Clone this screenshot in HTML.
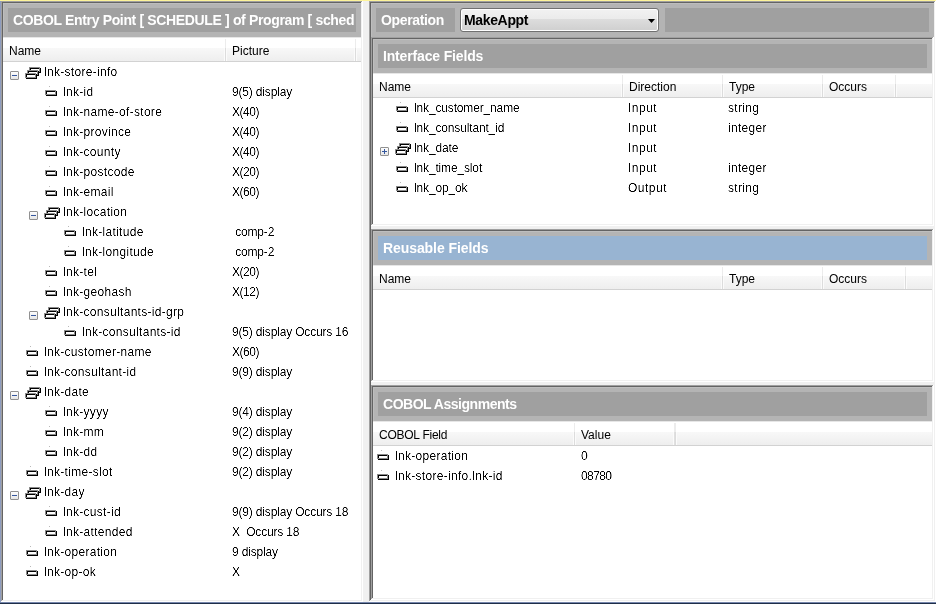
<!DOCTYPE html>
<html><head><meta charset="utf-8"><style>
html,body{margin:0;padding:0;}
body{width:936px;height:604px;position:relative;overflow:hidden;background:#f0f0f0;}
body>div,body>svg{position:absolute;}
.t{font-family:"Liberation Sans",sans-serif;font-size:12px;color:#000;white-space:pre;will-change:transform;}
.tw{background:#fff;filter:brightness(1.08) contrast(1.8);}
.tb{font-family:"Liberation Sans",sans-serif;font-size:14px;font-weight:bold;color:#fff;white-space:pre;line-height:24px;letter-spacing:-0.35px;will-change:transform;}
</style></head><body>
<div style="left:0px;top:0px;width:936px;height:604px;background:#f0f0f0;"></div>
<div style="left:0px;top:0px;width:936px;height:1px;background:#fff59a;"></div>
<div style="left:0px;top:1px;width:1px;height:601px;background:#8e9cbf;"></div>
<div style="left:0px;top:602px;width:936px;height:1px;background:#7686ac;"></div>
<div style="left:0px;top:603px;width:936px;height:1px;background:#1e2e48;"></div>
<div style="left:1px;top:1px;width:362px;height:1px;background:#a0a0a0;"></div>
<div style="left:1px;top:1px;width:1px;height:601px;background:#a0a0a0;"></div>
<div style="left:2px;top:2px;width:360px;height:1px;background:#646464;"></div>
<div style="left:2px;top:2px;width:1px;height:599px;background:#646464;"></div>
<div style="left:2px;top:600px;width:360px;height:1px;background:#f0f0f0;"></div>
<div style="left:361px;top:2px;width:1px;height:599px;background:#f0f0f0;"></div>
<div style="left:1px;top:601px;width:362px;height:1px;background:#ffffff;"></div>
<div style="left:362px;top:1px;width:1px;height:601px;background:#ffffff;"></div>
<div style="left:3px;top:3px;width:358px;height:34px;background:#b4b4b4;"></div>
<div style="left:3px;top:3px;width:358px;height:1px;background:#bebebe;"></div>
<div style="left:3px;top:3px;width:1px;height:34px;background:#bebebe;"></div>
<div style="left:8px;top:8px;width:348px;height:24px;background:#a0a0a0;"></div>
<div style="left:3px;top:37px;width:358px;height:563px;background:#ffffff;"></div>
<div class="tb" style="left:13px;top:8px;width:342px;overflow:hidden;letter-spacing:-0.35px">COBOL Entry Point [ SCHEDULE ] of Program [ sched</div>
<div style="left:3px;top:37px;width:358px;height:11px;background:#ffffff;"></div>
<div style="left:3px;top:37px;width:358px;height:1px;background:#e6e6e6;"></div>
<div style="left:3px;top:48px;width:358px;height:13px;background:linear-gradient(#f8f8f8,#eeeeee)"></div>
<div style="left:3px;top:61px;width:358px;height:1px;background:#d2d2d2;"></div>
<div style="left:225px;top:39px;width:1px;height:9px;background:#ececec;"></div>
<div style="left:225px;top:48px;width:1px;height:13px;background:#dcdcdc;"></div>
<div style="left:224px;top:48px;width:1px;height:13px;background:#fbfbfb;"></div>
<div style="left:226px;top:48px;width:1px;height:13px;background:#fbfbfb;"></div>
<div style="left:355px;top:39px;width:1px;height:9px;background:#ececec;"></div>
<div style="left:355px;top:48px;width:1px;height:13px;background:#dcdcdc;"></div>
<div style="left:354px;top:48px;width:1px;height:13px;background:#fbfbfb;"></div>
<div style="left:356px;top:48px;width:1px;height:13px;background:#fbfbfb;"></div>
<div class="t" style="left:9px;top:39px;line-height:24px">Name</div>
<div class="t" style="left:232px;top:39px;line-height:24px">Picture</div>
<div style="left:10px;top:71px;width:7px;height:7px;border:1px solid #919191;border-radius:1px;background:linear-gradient(#fdfdfd,#e6e6e6)"></div>
<div style="left:12px;top:75px;width:5px;height:1px;background:#35579e;"></div>
<div style="left:29px;top:67px;width:11px;height:1px;background:#8a8a8a;"></div>
<div style="left:29px;top:67px;width:1px;height:5px;background:#8a8a8a;"></div>
<div style="left:29px;top:71px;width:11px;height:1px;background:#8a8a8a;"></div>
<div style="left:39px;top:67px;width:1px;height:5px;background:#8a8a8a;"></div>
<div style="left:30px;top:68px;width:9px;height:1px;background:#000;"></div>
<div style="left:30px;top:68px;width:1px;height:3px;background:#000;"></div>
<div style="left:31px;top:69px;width:8px;height:2px;background:#fff;"></div>
<div style="left:40px;top:68px;width:1px;height:5px;background:#000;"></div>
<div style="left:30px;top:72px;width:11px;height:1px;background:#000;"></div>
<div style="left:27px;top:70px;width:11px;height:1px;background:#8a8a8a;"></div>
<div style="left:27px;top:70px;width:1px;height:5px;background:#8a8a8a;"></div>
<div style="left:27px;top:74px;width:11px;height:1px;background:#8a8a8a;"></div>
<div style="left:37px;top:70px;width:1px;height:5px;background:#8a8a8a;"></div>
<div style="left:28px;top:71px;width:9px;height:1px;background:#000;"></div>
<div style="left:28px;top:71px;width:1px;height:3px;background:#000;"></div>
<div style="left:29px;top:72px;width:8px;height:2px;background:#fff;"></div>
<div style="left:38px;top:71px;width:1px;height:5px;background:#000;"></div>
<div style="left:28px;top:75px;width:11px;height:1px;background:#000;"></div>
<div style="left:25px;top:73px;width:11px;height:1px;background:#8a8a8a;"></div>
<div style="left:25px;top:73px;width:1px;height:5px;background:#8a8a8a;"></div>
<div style="left:25px;top:77px;width:11px;height:1px;background:#8a8a8a;"></div>
<div style="left:35px;top:73px;width:1px;height:5px;background:#8a8a8a;"></div>
<div style="left:26px;top:74px;width:9px;height:1px;background:#000;"></div>
<div style="left:26px;top:74px;width:1px;height:3px;background:#000;"></div>
<div style="left:27px;top:75px;width:8px;height:2px;background:#fff;"></div>
<div style="left:36px;top:74px;width:1px;height:5px;background:#000;"></div>
<div style="left:26px;top:78px;width:11px;height:1px;background:#000;"></div>
<div class="t tw" style="left:44px;top:62px;line-height:20px;letter-spacing:0.3px">lnk-store-info</div>
<div style="left:49px;top:86px;width:1px;height:1px;background:#b8b8b8;"></div>
<div style="left:45px;top:90px;width:11px;height:1px;background:#8a8a8a;"></div>
<div style="left:45px;top:90px;width:1px;height:5px;background:#8a8a8a;"></div>
<div style="left:45px;top:94px;width:11px;height:1px;background:#8a8a8a;"></div>
<div style="left:55px;top:90px;width:1px;height:5px;background:#8a8a8a;"></div>
<div style="left:46px;top:91px;width:9px;height:1px;background:#000;"></div>
<div style="left:46px;top:91px;width:1px;height:3px;background:#000;"></div>
<div style="left:47px;top:92px;width:8px;height:2px;background:#fff;"></div>
<div style="left:56px;top:91px;width:1px;height:5px;background:#000;"></div>
<div style="left:46px;top:95px;width:11px;height:1px;background:#000;"></div>
<div class="t tw" style="left:63px;top:82px;line-height:20px;letter-spacing:0.3px">lnk-id</div>
<div class="t tw" style="left:232px;top:82px;line-height:20px;letter-spacing:-0.17px">9(5) display</div>
<div style="left:49px;top:106px;width:1px;height:1px;background:#b8b8b8;"></div>
<div style="left:45px;top:110px;width:11px;height:1px;background:#8a8a8a;"></div>
<div style="left:45px;top:110px;width:1px;height:5px;background:#8a8a8a;"></div>
<div style="left:45px;top:114px;width:11px;height:1px;background:#8a8a8a;"></div>
<div style="left:55px;top:110px;width:1px;height:5px;background:#8a8a8a;"></div>
<div style="left:46px;top:111px;width:9px;height:1px;background:#000;"></div>
<div style="left:46px;top:111px;width:1px;height:3px;background:#000;"></div>
<div style="left:47px;top:112px;width:8px;height:2px;background:#fff;"></div>
<div style="left:56px;top:111px;width:1px;height:5px;background:#000;"></div>
<div style="left:46px;top:115px;width:11px;height:1px;background:#000;"></div>
<div class="t tw" style="left:63px;top:102px;line-height:20px;letter-spacing:0.3px">lnk-name-of-store</div>
<div class="t tw" style="left:232px;top:102px;line-height:20px;letter-spacing:-0.45px">X(40)</div>
<div style="left:49px;top:126px;width:1px;height:1px;background:#b8b8b8;"></div>
<div style="left:45px;top:130px;width:11px;height:1px;background:#8a8a8a;"></div>
<div style="left:45px;top:130px;width:1px;height:5px;background:#8a8a8a;"></div>
<div style="left:45px;top:134px;width:11px;height:1px;background:#8a8a8a;"></div>
<div style="left:55px;top:130px;width:1px;height:5px;background:#8a8a8a;"></div>
<div style="left:46px;top:131px;width:9px;height:1px;background:#000;"></div>
<div style="left:46px;top:131px;width:1px;height:3px;background:#000;"></div>
<div style="left:47px;top:132px;width:8px;height:2px;background:#fff;"></div>
<div style="left:56px;top:131px;width:1px;height:5px;background:#000;"></div>
<div style="left:46px;top:135px;width:11px;height:1px;background:#000;"></div>
<div class="t tw" style="left:63px;top:122px;line-height:20px;letter-spacing:0.3px">lnk-province</div>
<div class="t tw" style="left:232px;top:122px;line-height:20px;letter-spacing:-0.45px">X(40)</div>
<div style="left:49px;top:146px;width:1px;height:1px;background:#b8b8b8;"></div>
<div style="left:45px;top:150px;width:11px;height:1px;background:#8a8a8a;"></div>
<div style="left:45px;top:150px;width:1px;height:5px;background:#8a8a8a;"></div>
<div style="left:45px;top:154px;width:11px;height:1px;background:#8a8a8a;"></div>
<div style="left:55px;top:150px;width:1px;height:5px;background:#8a8a8a;"></div>
<div style="left:46px;top:151px;width:9px;height:1px;background:#000;"></div>
<div style="left:46px;top:151px;width:1px;height:3px;background:#000;"></div>
<div style="left:47px;top:152px;width:8px;height:2px;background:#fff;"></div>
<div style="left:56px;top:151px;width:1px;height:5px;background:#000;"></div>
<div style="left:46px;top:155px;width:11px;height:1px;background:#000;"></div>
<div class="t tw" style="left:63px;top:142px;line-height:20px;letter-spacing:0.3px">lnk-county</div>
<div class="t tw" style="left:232px;top:142px;line-height:20px;letter-spacing:-0.45px">X(40)</div>
<div style="left:49px;top:166px;width:1px;height:1px;background:#b8b8b8;"></div>
<div style="left:45px;top:170px;width:11px;height:1px;background:#8a8a8a;"></div>
<div style="left:45px;top:170px;width:1px;height:5px;background:#8a8a8a;"></div>
<div style="left:45px;top:174px;width:11px;height:1px;background:#8a8a8a;"></div>
<div style="left:55px;top:170px;width:1px;height:5px;background:#8a8a8a;"></div>
<div style="left:46px;top:171px;width:9px;height:1px;background:#000;"></div>
<div style="left:46px;top:171px;width:1px;height:3px;background:#000;"></div>
<div style="left:47px;top:172px;width:8px;height:2px;background:#fff;"></div>
<div style="left:56px;top:171px;width:1px;height:5px;background:#000;"></div>
<div style="left:46px;top:175px;width:11px;height:1px;background:#000;"></div>
<div class="t tw" style="left:63px;top:162px;line-height:20px;letter-spacing:0.3px">lnk-postcode</div>
<div class="t tw" style="left:232px;top:162px;line-height:20px;letter-spacing:-0.45px">X(20)</div>
<div style="left:49px;top:186px;width:1px;height:1px;background:#b8b8b8;"></div>
<div style="left:45px;top:190px;width:11px;height:1px;background:#8a8a8a;"></div>
<div style="left:45px;top:190px;width:1px;height:5px;background:#8a8a8a;"></div>
<div style="left:45px;top:194px;width:11px;height:1px;background:#8a8a8a;"></div>
<div style="left:55px;top:190px;width:1px;height:5px;background:#8a8a8a;"></div>
<div style="left:46px;top:191px;width:9px;height:1px;background:#000;"></div>
<div style="left:46px;top:191px;width:1px;height:3px;background:#000;"></div>
<div style="left:47px;top:192px;width:8px;height:2px;background:#fff;"></div>
<div style="left:56px;top:191px;width:1px;height:5px;background:#000;"></div>
<div style="left:46px;top:195px;width:11px;height:1px;background:#000;"></div>
<div class="t tw" style="left:63px;top:182px;line-height:20px;letter-spacing:0.3px">lnk-email</div>
<div class="t tw" style="left:232px;top:182px;line-height:20px;letter-spacing:-0.45px">X(60)</div>
<div style="left:29px;top:211px;width:7px;height:7px;border:1px solid #919191;border-radius:1px;background:linear-gradient(#fdfdfd,#e6e6e6)"></div>
<div style="left:31px;top:215px;width:5px;height:1px;background:#35579e;"></div>
<div style="left:48px;top:207px;width:11px;height:1px;background:#8a8a8a;"></div>
<div style="left:48px;top:207px;width:1px;height:5px;background:#8a8a8a;"></div>
<div style="left:48px;top:211px;width:11px;height:1px;background:#8a8a8a;"></div>
<div style="left:58px;top:207px;width:1px;height:5px;background:#8a8a8a;"></div>
<div style="left:49px;top:208px;width:9px;height:1px;background:#000;"></div>
<div style="left:49px;top:208px;width:1px;height:3px;background:#000;"></div>
<div style="left:50px;top:209px;width:8px;height:2px;background:#fff;"></div>
<div style="left:59px;top:208px;width:1px;height:5px;background:#000;"></div>
<div style="left:49px;top:212px;width:11px;height:1px;background:#000;"></div>
<div style="left:46px;top:210px;width:11px;height:1px;background:#8a8a8a;"></div>
<div style="left:46px;top:210px;width:1px;height:5px;background:#8a8a8a;"></div>
<div style="left:46px;top:214px;width:11px;height:1px;background:#8a8a8a;"></div>
<div style="left:56px;top:210px;width:1px;height:5px;background:#8a8a8a;"></div>
<div style="left:47px;top:211px;width:9px;height:1px;background:#000;"></div>
<div style="left:47px;top:211px;width:1px;height:3px;background:#000;"></div>
<div style="left:48px;top:212px;width:8px;height:2px;background:#fff;"></div>
<div style="left:57px;top:211px;width:1px;height:5px;background:#000;"></div>
<div style="left:47px;top:215px;width:11px;height:1px;background:#000;"></div>
<div style="left:44px;top:213px;width:11px;height:1px;background:#8a8a8a;"></div>
<div style="left:44px;top:213px;width:1px;height:5px;background:#8a8a8a;"></div>
<div style="left:44px;top:217px;width:11px;height:1px;background:#8a8a8a;"></div>
<div style="left:54px;top:213px;width:1px;height:5px;background:#8a8a8a;"></div>
<div style="left:45px;top:214px;width:9px;height:1px;background:#000;"></div>
<div style="left:45px;top:214px;width:1px;height:3px;background:#000;"></div>
<div style="left:46px;top:215px;width:8px;height:2px;background:#fff;"></div>
<div style="left:55px;top:214px;width:1px;height:5px;background:#000;"></div>
<div style="left:45px;top:218px;width:11px;height:1px;background:#000;"></div>
<div class="t tw" style="left:63px;top:202px;line-height:20px;letter-spacing:0.3px">lnk-location</div>
<div style="left:68px;top:226px;width:1px;height:1px;background:#b8b8b8;"></div>
<div style="left:64px;top:230px;width:11px;height:1px;background:#8a8a8a;"></div>
<div style="left:64px;top:230px;width:1px;height:5px;background:#8a8a8a;"></div>
<div style="left:64px;top:234px;width:11px;height:1px;background:#8a8a8a;"></div>
<div style="left:74px;top:230px;width:1px;height:5px;background:#8a8a8a;"></div>
<div style="left:65px;top:231px;width:9px;height:1px;background:#000;"></div>
<div style="left:65px;top:231px;width:1px;height:3px;background:#000;"></div>
<div style="left:66px;top:232px;width:8px;height:2px;background:#fff;"></div>
<div style="left:75px;top:231px;width:1px;height:5px;background:#000;"></div>
<div style="left:65px;top:235px;width:11px;height:1px;background:#000;"></div>
<div class="t tw" style="left:82px;top:222px;line-height:20px;letter-spacing:0.3px">lnk-latitude</div>
<div class="t tw" style="left:232px;top:222px;line-height:20px;letter-spacing:-0.17px"> comp-2</div>
<div style="left:68px;top:246px;width:1px;height:1px;background:#b8b8b8;"></div>
<div style="left:64px;top:250px;width:11px;height:1px;background:#8a8a8a;"></div>
<div style="left:64px;top:250px;width:1px;height:5px;background:#8a8a8a;"></div>
<div style="left:64px;top:254px;width:11px;height:1px;background:#8a8a8a;"></div>
<div style="left:74px;top:250px;width:1px;height:5px;background:#8a8a8a;"></div>
<div style="left:65px;top:251px;width:9px;height:1px;background:#000;"></div>
<div style="left:65px;top:251px;width:1px;height:3px;background:#000;"></div>
<div style="left:66px;top:252px;width:8px;height:2px;background:#fff;"></div>
<div style="left:75px;top:251px;width:1px;height:5px;background:#000;"></div>
<div style="left:65px;top:255px;width:11px;height:1px;background:#000;"></div>
<div class="t tw" style="left:82px;top:242px;line-height:20px;letter-spacing:0.3px">lnk-longitude</div>
<div class="t tw" style="left:232px;top:242px;line-height:20px;letter-spacing:-0.17px"> comp-2</div>
<div style="left:49px;top:266px;width:1px;height:1px;background:#b8b8b8;"></div>
<div style="left:45px;top:270px;width:11px;height:1px;background:#8a8a8a;"></div>
<div style="left:45px;top:270px;width:1px;height:5px;background:#8a8a8a;"></div>
<div style="left:45px;top:274px;width:11px;height:1px;background:#8a8a8a;"></div>
<div style="left:55px;top:270px;width:1px;height:5px;background:#8a8a8a;"></div>
<div style="left:46px;top:271px;width:9px;height:1px;background:#000;"></div>
<div style="left:46px;top:271px;width:1px;height:3px;background:#000;"></div>
<div style="left:47px;top:272px;width:8px;height:2px;background:#fff;"></div>
<div style="left:56px;top:271px;width:1px;height:5px;background:#000;"></div>
<div style="left:46px;top:275px;width:11px;height:1px;background:#000;"></div>
<div class="t tw" style="left:63px;top:262px;line-height:20px;letter-spacing:0.3px">lnk-tel</div>
<div class="t tw" style="left:232px;top:262px;line-height:20px;letter-spacing:-0.45px">X(20)</div>
<div style="left:49px;top:286px;width:1px;height:1px;background:#b8b8b8;"></div>
<div style="left:45px;top:290px;width:11px;height:1px;background:#8a8a8a;"></div>
<div style="left:45px;top:290px;width:1px;height:5px;background:#8a8a8a;"></div>
<div style="left:45px;top:294px;width:11px;height:1px;background:#8a8a8a;"></div>
<div style="left:55px;top:290px;width:1px;height:5px;background:#8a8a8a;"></div>
<div style="left:46px;top:291px;width:9px;height:1px;background:#000;"></div>
<div style="left:46px;top:291px;width:1px;height:3px;background:#000;"></div>
<div style="left:47px;top:292px;width:8px;height:2px;background:#fff;"></div>
<div style="left:56px;top:291px;width:1px;height:5px;background:#000;"></div>
<div style="left:46px;top:295px;width:11px;height:1px;background:#000;"></div>
<div class="t tw" style="left:63px;top:282px;line-height:20px;letter-spacing:0.3px">lnk-geohash</div>
<div class="t tw" style="left:232px;top:282px;line-height:20px;letter-spacing:-0.45px">X(12)</div>
<div style="left:29px;top:311px;width:7px;height:7px;border:1px solid #919191;border-radius:1px;background:linear-gradient(#fdfdfd,#e6e6e6)"></div>
<div style="left:31px;top:315px;width:5px;height:1px;background:#35579e;"></div>
<div style="left:48px;top:307px;width:11px;height:1px;background:#8a8a8a;"></div>
<div style="left:48px;top:307px;width:1px;height:5px;background:#8a8a8a;"></div>
<div style="left:48px;top:311px;width:11px;height:1px;background:#8a8a8a;"></div>
<div style="left:58px;top:307px;width:1px;height:5px;background:#8a8a8a;"></div>
<div style="left:49px;top:308px;width:9px;height:1px;background:#000;"></div>
<div style="left:49px;top:308px;width:1px;height:3px;background:#000;"></div>
<div style="left:50px;top:309px;width:8px;height:2px;background:#fff;"></div>
<div style="left:59px;top:308px;width:1px;height:5px;background:#000;"></div>
<div style="left:49px;top:312px;width:11px;height:1px;background:#000;"></div>
<div style="left:46px;top:310px;width:11px;height:1px;background:#8a8a8a;"></div>
<div style="left:46px;top:310px;width:1px;height:5px;background:#8a8a8a;"></div>
<div style="left:46px;top:314px;width:11px;height:1px;background:#8a8a8a;"></div>
<div style="left:56px;top:310px;width:1px;height:5px;background:#8a8a8a;"></div>
<div style="left:47px;top:311px;width:9px;height:1px;background:#000;"></div>
<div style="left:47px;top:311px;width:1px;height:3px;background:#000;"></div>
<div style="left:48px;top:312px;width:8px;height:2px;background:#fff;"></div>
<div style="left:57px;top:311px;width:1px;height:5px;background:#000;"></div>
<div style="left:47px;top:315px;width:11px;height:1px;background:#000;"></div>
<div style="left:44px;top:313px;width:11px;height:1px;background:#8a8a8a;"></div>
<div style="left:44px;top:313px;width:1px;height:5px;background:#8a8a8a;"></div>
<div style="left:44px;top:317px;width:11px;height:1px;background:#8a8a8a;"></div>
<div style="left:54px;top:313px;width:1px;height:5px;background:#8a8a8a;"></div>
<div style="left:45px;top:314px;width:9px;height:1px;background:#000;"></div>
<div style="left:45px;top:314px;width:1px;height:3px;background:#000;"></div>
<div style="left:46px;top:315px;width:8px;height:2px;background:#fff;"></div>
<div style="left:55px;top:314px;width:1px;height:5px;background:#000;"></div>
<div style="left:45px;top:318px;width:11px;height:1px;background:#000;"></div>
<div class="t tw" style="left:63px;top:302px;line-height:20px;letter-spacing:0.3px">lnk-consultants-id-grp</div>
<div style="left:68px;top:326px;width:1px;height:1px;background:#b8b8b8;"></div>
<div style="left:64px;top:330px;width:11px;height:1px;background:#8a8a8a;"></div>
<div style="left:64px;top:330px;width:1px;height:5px;background:#8a8a8a;"></div>
<div style="left:64px;top:334px;width:11px;height:1px;background:#8a8a8a;"></div>
<div style="left:74px;top:330px;width:1px;height:5px;background:#8a8a8a;"></div>
<div style="left:65px;top:331px;width:9px;height:1px;background:#000;"></div>
<div style="left:65px;top:331px;width:1px;height:3px;background:#000;"></div>
<div style="left:66px;top:332px;width:8px;height:2px;background:#fff;"></div>
<div style="left:75px;top:331px;width:1px;height:5px;background:#000;"></div>
<div style="left:65px;top:335px;width:11px;height:1px;background:#000;"></div>
<div class="t tw" style="left:82px;top:322px;line-height:20px;letter-spacing:0.3px">lnk-consultants-id</div>
<div class="t tw" style="left:232px;top:322px;line-height:20px;letter-spacing:-0.17px">9(5) display Occurs 16</div>
<div style="left:30px;top:346px;width:1px;height:1px;background:#b8b8b8;"></div>
<div style="left:26px;top:350px;width:11px;height:1px;background:#8a8a8a;"></div>
<div style="left:26px;top:350px;width:1px;height:5px;background:#8a8a8a;"></div>
<div style="left:26px;top:354px;width:11px;height:1px;background:#8a8a8a;"></div>
<div style="left:36px;top:350px;width:1px;height:5px;background:#8a8a8a;"></div>
<div style="left:27px;top:351px;width:9px;height:1px;background:#000;"></div>
<div style="left:27px;top:351px;width:1px;height:3px;background:#000;"></div>
<div style="left:28px;top:352px;width:8px;height:2px;background:#fff;"></div>
<div style="left:37px;top:351px;width:1px;height:5px;background:#000;"></div>
<div style="left:27px;top:355px;width:11px;height:1px;background:#000;"></div>
<div class="t tw" style="left:44px;top:342px;line-height:20px;letter-spacing:0.3px">lnk-customer-name</div>
<div class="t tw" style="left:232px;top:342px;line-height:20px;letter-spacing:-0.45px">X(60)</div>
<div style="left:30px;top:366px;width:1px;height:1px;background:#b8b8b8;"></div>
<div style="left:26px;top:370px;width:11px;height:1px;background:#8a8a8a;"></div>
<div style="left:26px;top:370px;width:1px;height:5px;background:#8a8a8a;"></div>
<div style="left:26px;top:374px;width:11px;height:1px;background:#8a8a8a;"></div>
<div style="left:36px;top:370px;width:1px;height:5px;background:#8a8a8a;"></div>
<div style="left:27px;top:371px;width:9px;height:1px;background:#000;"></div>
<div style="left:27px;top:371px;width:1px;height:3px;background:#000;"></div>
<div style="left:28px;top:372px;width:8px;height:2px;background:#fff;"></div>
<div style="left:37px;top:371px;width:1px;height:5px;background:#000;"></div>
<div style="left:27px;top:375px;width:11px;height:1px;background:#000;"></div>
<div class="t tw" style="left:44px;top:362px;line-height:20px;letter-spacing:0.3px">lnk-consultant-id</div>
<div class="t tw" style="left:232px;top:362px;line-height:20px;letter-spacing:-0.17px">9(9) display</div>
<div style="left:10px;top:391px;width:7px;height:7px;border:1px solid #919191;border-radius:1px;background:linear-gradient(#fdfdfd,#e6e6e6)"></div>
<div style="left:12px;top:395px;width:5px;height:1px;background:#35579e;"></div>
<div style="left:29px;top:387px;width:11px;height:1px;background:#8a8a8a;"></div>
<div style="left:29px;top:387px;width:1px;height:5px;background:#8a8a8a;"></div>
<div style="left:29px;top:391px;width:11px;height:1px;background:#8a8a8a;"></div>
<div style="left:39px;top:387px;width:1px;height:5px;background:#8a8a8a;"></div>
<div style="left:30px;top:388px;width:9px;height:1px;background:#000;"></div>
<div style="left:30px;top:388px;width:1px;height:3px;background:#000;"></div>
<div style="left:31px;top:389px;width:8px;height:2px;background:#fff;"></div>
<div style="left:40px;top:388px;width:1px;height:5px;background:#000;"></div>
<div style="left:30px;top:392px;width:11px;height:1px;background:#000;"></div>
<div style="left:27px;top:390px;width:11px;height:1px;background:#8a8a8a;"></div>
<div style="left:27px;top:390px;width:1px;height:5px;background:#8a8a8a;"></div>
<div style="left:27px;top:394px;width:11px;height:1px;background:#8a8a8a;"></div>
<div style="left:37px;top:390px;width:1px;height:5px;background:#8a8a8a;"></div>
<div style="left:28px;top:391px;width:9px;height:1px;background:#000;"></div>
<div style="left:28px;top:391px;width:1px;height:3px;background:#000;"></div>
<div style="left:29px;top:392px;width:8px;height:2px;background:#fff;"></div>
<div style="left:38px;top:391px;width:1px;height:5px;background:#000;"></div>
<div style="left:28px;top:395px;width:11px;height:1px;background:#000;"></div>
<div style="left:25px;top:393px;width:11px;height:1px;background:#8a8a8a;"></div>
<div style="left:25px;top:393px;width:1px;height:5px;background:#8a8a8a;"></div>
<div style="left:25px;top:397px;width:11px;height:1px;background:#8a8a8a;"></div>
<div style="left:35px;top:393px;width:1px;height:5px;background:#8a8a8a;"></div>
<div style="left:26px;top:394px;width:9px;height:1px;background:#000;"></div>
<div style="left:26px;top:394px;width:1px;height:3px;background:#000;"></div>
<div style="left:27px;top:395px;width:8px;height:2px;background:#fff;"></div>
<div style="left:36px;top:394px;width:1px;height:5px;background:#000;"></div>
<div style="left:26px;top:398px;width:11px;height:1px;background:#000;"></div>
<div class="t tw" style="left:44px;top:382px;line-height:20px;letter-spacing:0.3px">lnk-date</div>
<div style="left:49px;top:406px;width:1px;height:1px;background:#b8b8b8;"></div>
<div style="left:45px;top:410px;width:11px;height:1px;background:#8a8a8a;"></div>
<div style="left:45px;top:410px;width:1px;height:5px;background:#8a8a8a;"></div>
<div style="left:45px;top:414px;width:11px;height:1px;background:#8a8a8a;"></div>
<div style="left:55px;top:410px;width:1px;height:5px;background:#8a8a8a;"></div>
<div style="left:46px;top:411px;width:9px;height:1px;background:#000;"></div>
<div style="left:46px;top:411px;width:1px;height:3px;background:#000;"></div>
<div style="left:47px;top:412px;width:8px;height:2px;background:#fff;"></div>
<div style="left:56px;top:411px;width:1px;height:5px;background:#000;"></div>
<div style="left:46px;top:415px;width:11px;height:1px;background:#000;"></div>
<div class="t tw" style="left:63px;top:402px;line-height:20px;letter-spacing:0.3px">lnk-yyyy</div>
<div class="t tw" style="left:232px;top:402px;line-height:20px;letter-spacing:-0.17px">9(4) display</div>
<div style="left:49px;top:426px;width:1px;height:1px;background:#b8b8b8;"></div>
<div style="left:45px;top:430px;width:11px;height:1px;background:#8a8a8a;"></div>
<div style="left:45px;top:430px;width:1px;height:5px;background:#8a8a8a;"></div>
<div style="left:45px;top:434px;width:11px;height:1px;background:#8a8a8a;"></div>
<div style="left:55px;top:430px;width:1px;height:5px;background:#8a8a8a;"></div>
<div style="left:46px;top:431px;width:9px;height:1px;background:#000;"></div>
<div style="left:46px;top:431px;width:1px;height:3px;background:#000;"></div>
<div style="left:47px;top:432px;width:8px;height:2px;background:#fff;"></div>
<div style="left:56px;top:431px;width:1px;height:5px;background:#000;"></div>
<div style="left:46px;top:435px;width:11px;height:1px;background:#000;"></div>
<div class="t tw" style="left:63px;top:422px;line-height:20px;letter-spacing:0.3px">lnk-mm</div>
<div class="t tw" style="left:232px;top:422px;line-height:20px;letter-spacing:-0.17px">9(2) display</div>
<div style="left:49px;top:446px;width:1px;height:1px;background:#b8b8b8;"></div>
<div style="left:45px;top:450px;width:11px;height:1px;background:#8a8a8a;"></div>
<div style="left:45px;top:450px;width:1px;height:5px;background:#8a8a8a;"></div>
<div style="left:45px;top:454px;width:11px;height:1px;background:#8a8a8a;"></div>
<div style="left:55px;top:450px;width:1px;height:5px;background:#8a8a8a;"></div>
<div style="left:46px;top:451px;width:9px;height:1px;background:#000;"></div>
<div style="left:46px;top:451px;width:1px;height:3px;background:#000;"></div>
<div style="left:47px;top:452px;width:8px;height:2px;background:#fff;"></div>
<div style="left:56px;top:451px;width:1px;height:5px;background:#000;"></div>
<div style="left:46px;top:455px;width:11px;height:1px;background:#000;"></div>
<div class="t tw" style="left:63px;top:442px;line-height:20px;letter-spacing:0.3px">lnk-dd</div>
<div class="t tw" style="left:232px;top:442px;line-height:20px;letter-spacing:-0.17px">9(2) display</div>
<div style="left:30px;top:466px;width:1px;height:1px;background:#b8b8b8;"></div>
<div style="left:26px;top:470px;width:11px;height:1px;background:#8a8a8a;"></div>
<div style="left:26px;top:470px;width:1px;height:5px;background:#8a8a8a;"></div>
<div style="left:26px;top:474px;width:11px;height:1px;background:#8a8a8a;"></div>
<div style="left:36px;top:470px;width:1px;height:5px;background:#8a8a8a;"></div>
<div style="left:27px;top:471px;width:9px;height:1px;background:#000;"></div>
<div style="left:27px;top:471px;width:1px;height:3px;background:#000;"></div>
<div style="left:28px;top:472px;width:8px;height:2px;background:#fff;"></div>
<div style="left:37px;top:471px;width:1px;height:5px;background:#000;"></div>
<div style="left:27px;top:475px;width:11px;height:1px;background:#000;"></div>
<div class="t tw" style="left:44px;top:462px;line-height:20px;letter-spacing:0.3px">lnk-time-slot</div>
<div class="t tw" style="left:232px;top:462px;line-height:20px;letter-spacing:-0.17px">9(2) display</div>
<div style="left:10px;top:491px;width:7px;height:7px;border:1px solid #919191;border-radius:1px;background:linear-gradient(#fdfdfd,#e6e6e6)"></div>
<div style="left:12px;top:495px;width:5px;height:1px;background:#35579e;"></div>
<div style="left:29px;top:487px;width:11px;height:1px;background:#8a8a8a;"></div>
<div style="left:29px;top:487px;width:1px;height:5px;background:#8a8a8a;"></div>
<div style="left:29px;top:491px;width:11px;height:1px;background:#8a8a8a;"></div>
<div style="left:39px;top:487px;width:1px;height:5px;background:#8a8a8a;"></div>
<div style="left:30px;top:488px;width:9px;height:1px;background:#000;"></div>
<div style="left:30px;top:488px;width:1px;height:3px;background:#000;"></div>
<div style="left:31px;top:489px;width:8px;height:2px;background:#fff;"></div>
<div style="left:40px;top:488px;width:1px;height:5px;background:#000;"></div>
<div style="left:30px;top:492px;width:11px;height:1px;background:#000;"></div>
<div style="left:27px;top:490px;width:11px;height:1px;background:#8a8a8a;"></div>
<div style="left:27px;top:490px;width:1px;height:5px;background:#8a8a8a;"></div>
<div style="left:27px;top:494px;width:11px;height:1px;background:#8a8a8a;"></div>
<div style="left:37px;top:490px;width:1px;height:5px;background:#8a8a8a;"></div>
<div style="left:28px;top:491px;width:9px;height:1px;background:#000;"></div>
<div style="left:28px;top:491px;width:1px;height:3px;background:#000;"></div>
<div style="left:29px;top:492px;width:8px;height:2px;background:#fff;"></div>
<div style="left:38px;top:491px;width:1px;height:5px;background:#000;"></div>
<div style="left:28px;top:495px;width:11px;height:1px;background:#000;"></div>
<div style="left:25px;top:493px;width:11px;height:1px;background:#8a8a8a;"></div>
<div style="left:25px;top:493px;width:1px;height:5px;background:#8a8a8a;"></div>
<div style="left:25px;top:497px;width:11px;height:1px;background:#8a8a8a;"></div>
<div style="left:35px;top:493px;width:1px;height:5px;background:#8a8a8a;"></div>
<div style="left:26px;top:494px;width:9px;height:1px;background:#000;"></div>
<div style="left:26px;top:494px;width:1px;height:3px;background:#000;"></div>
<div style="left:27px;top:495px;width:8px;height:2px;background:#fff;"></div>
<div style="left:36px;top:494px;width:1px;height:5px;background:#000;"></div>
<div style="left:26px;top:498px;width:11px;height:1px;background:#000;"></div>
<div class="t tw" style="left:44px;top:482px;line-height:20px;letter-spacing:0.3px">lnk-day</div>
<div style="left:49px;top:506px;width:1px;height:1px;background:#b8b8b8;"></div>
<div style="left:45px;top:510px;width:11px;height:1px;background:#8a8a8a;"></div>
<div style="left:45px;top:510px;width:1px;height:5px;background:#8a8a8a;"></div>
<div style="left:45px;top:514px;width:11px;height:1px;background:#8a8a8a;"></div>
<div style="left:55px;top:510px;width:1px;height:5px;background:#8a8a8a;"></div>
<div style="left:46px;top:511px;width:9px;height:1px;background:#000;"></div>
<div style="left:46px;top:511px;width:1px;height:3px;background:#000;"></div>
<div style="left:47px;top:512px;width:8px;height:2px;background:#fff;"></div>
<div style="left:56px;top:511px;width:1px;height:5px;background:#000;"></div>
<div style="left:46px;top:515px;width:11px;height:1px;background:#000;"></div>
<div class="t tw" style="left:63px;top:502px;line-height:20px;letter-spacing:0.3px">lnk-cust-id</div>
<div class="t tw" style="left:232px;top:502px;line-height:20px;letter-spacing:-0.17px">9(9) display Occurs 18</div>
<div style="left:49px;top:526px;width:1px;height:1px;background:#b8b8b8;"></div>
<div style="left:45px;top:530px;width:11px;height:1px;background:#8a8a8a;"></div>
<div style="left:45px;top:530px;width:1px;height:5px;background:#8a8a8a;"></div>
<div style="left:45px;top:534px;width:11px;height:1px;background:#8a8a8a;"></div>
<div style="left:55px;top:530px;width:1px;height:5px;background:#8a8a8a;"></div>
<div style="left:46px;top:531px;width:9px;height:1px;background:#000;"></div>
<div style="left:46px;top:531px;width:1px;height:3px;background:#000;"></div>
<div style="left:47px;top:532px;width:8px;height:2px;background:#fff;"></div>
<div style="left:56px;top:531px;width:1px;height:5px;background:#000;"></div>
<div style="left:46px;top:535px;width:11px;height:1px;background:#000;"></div>
<div class="t tw" style="left:63px;top:522px;line-height:20px;letter-spacing:0.3px">lnk-attended</div>
<div class="t tw" style="left:232px;top:522px;line-height:20px;letter-spacing:-0.17px">X  Occurs 18</div>
<div style="left:30px;top:546px;width:1px;height:1px;background:#b8b8b8;"></div>
<div style="left:26px;top:550px;width:11px;height:1px;background:#8a8a8a;"></div>
<div style="left:26px;top:550px;width:1px;height:5px;background:#8a8a8a;"></div>
<div style="left:26px;top:554px;width:11px;height:1px;background:#8a8a8a;"></div>
<div style="left:36px;top:550px;width:1px;height:5px;background:#8a8a8a;"></div>
<div style="left:27px;top:551px;width:9px;height:1px;background:#000;"></div>
<div style="left:27px;top:551px;width:1px;height:3px;background:#000;"></div>
<div style="left:28px;top:552px;width:8px;height:2px;background:#fff;"></div>
<div style="left:37px;top:551px;width:1px;height:5px;background:#000;"></div>
<div style="left:27px;top:555px;width:11px;height:1px;background:#000;"></div>
<div class="t tw" style="left:44px;top:542px;line-height:20px;letter-spacing:0.3px">lnk-operation</div>
<div class="t tw" style="left:232px;top:542px;line-height:20px;letter-spacing:-0.17px">9 display</div>
<div style="left:30px;top:566px;width:1px;height:1px;background:#b8b8b8;"></div>
<div style="left:26px;top:570px;width:11px;height:1px;background:#8a8a8a;"></div>
<div style="left:26px;top:570px;width:1px;height:5px;background:#8a8a8a;"></div>
<div style="left:26px;top:574px;width:11px;height:1px;background:#8a8a8a;"></div>
<div style="left:36px;top:570px;width:1px;height:5px;background:#8a8a8a;"></div>
<div style="left:27px;top:571px;width:9px;height:1px;background:#000;"></div>
<div style="left:27px;top:571px;width:1px;height:3px;background:#000;"></div>
<div style="left:28px;top:572px;width:8px;height:2px;background:#fff;"></div>
<div style="left:37px;top:571px;width:1px;height:5px;background:#000;"></div>
<div style="left:27px;top:575px;width:11px;height:1px;background:#000;"></div>
<div class="t tw" style="left:44px;top:562px;line-height:20px;letter-spacing:0.3px">lnk-op-ok</div>
<div class="t tw" style="left:232px;top:562px;line-height:20px;letter-spacing:-0.17px">X</div>
<div style="left:369px;top:1px;width:567px;height:1px;background:#a0a0a0;"></div>
<div style="left:369px;top:1px;width:1px;height:601px;background:#a0a0a0;"></div>
<div style="left:370px;top:2px;width:565px;height:1px;background:#646464;"></div>
<div style="left:370px;top:2px;width:1px;height:599px;background:#646464;"></div>
<div style="left:370px;top:600px;width:565px;height:1px;background:#f0f0f0;"></div>
<div style="left:934px;top:2px;width:1px;height:599px;background:#f0f0f0;"></div>
<div style="left:369px;top:601px;width:567px;height:1px;background:#ffffff;"></div>
<div style="left:935px;top:1px;width:1px;height:601px;background:#ffffff;"></div>
<div style="left:371px;top:3px;width:563px;height:34px;background:#b4b4b4;"></div>
<div style="left:371px;top:3px;width:563px;height:1px;background:#bebebe;"></div>
<div style="left:371px;top:3px;width:1px;height:34px;background:#bebebe;"></div>
<div style="left:376px;top:8px;width:553px;height:24px;background:#a0a0a0;"></div>
<div style="left:376px;top:8px;width:553px;height:24px;background:#b4b4b4;"></div>
<div style="left:376px;top:8px;width:79px;height:24px;background:#a0a0a0;"></div>
<div class="tb" style="left:381px;top:8px;">Operation</div>
<div style="left:460px;top:8px;width:197px;height:22px;border:1px solid #707070;border-radius:3px;background:linear-gradient(#f2f2f2 0,#ebebeb 45%,#dddddd 46%,#cfcfcf 100%);box-shadow:inset 0 0 0 1px #fff"></div>
<div class="tb" style="left:464px;top:8px;color:#000">MakeAppt</div>
<svg style="position:absolute;left:648px;top:19px" width="7" height="4"><path d="M0 0H7L3.5 4Z" fill="#000"/></svg>
<div style="left:665px;top:8px;width:264px;height:24px;background:#a0a0a0;"></div>
<div style="left:371px;top:37px;width:563px;height:1px;background:#a0a0a0;"></div>
<div style="left:371px;top:37px;width:1px;height:189px;background:#a0a0a0;"></div>
<div style="left:372px;top:38px;width:561px;height:1px;background:#646464;"></div>
<div style="left:372px;top:38px;width:1px;height:187px;background:#646464;"></div>
<div style="left:372px;top:224px;width:561px;height:1px;background:#f0f0f0;"></div>
<div style="left:932px;top:38px;width:1px;height:187px;background:#f0f0f0;"></div>
<div style="left:371px;top:225px;width:563px;height:1px;background:#ffffff;"></div>
<div style="left:933px;top:37px;width:1px;height:189px;background:#ffffff;"></div>
<div style="left:373px;top:39px;width:559px;height:34px;background:#b4b4b4;"></div>
<div style="left:373px;top:39px;width:559px;height:1px;background:#bebebe;"></div>
<div style="left:373px;top:39px;width:1px;height:34px;background:#bebebe;"></div>
<div style="left:378px;top:44px;width:549px;height:24px;background:#a0a0a0;"></div>
<div style="left:373px;top:73px;width:559px;height:151px;background:#ffffff;"></div>
<div class="tb" style="left:383px;top:44px;letter-spacing:-0.16px">Interface Fields</div>
<div style="left:371px;top:226px;width:563px;height:3px;background:#f0f0f0;"></div>
<div style="left:371px;top:229px;width:563px;height:1px;background:#a0a0a0;"></div>
<div style="left:371px;top:229px;width:1px;height:153px;background:#a0a0a0;"></div>
<div style="left:372px;top:230px;width:561px;height:1px;background:#646464;"></div>
<div style="left:372px;top:230px;width:1px;height:151px;background:#646464;"></div>
<div style="left:372px;top:380px;width:561px;height:1px;background:#f0f0f0;"></div>
<div style="left:932px;top:230px;width:1px;height:151px;background:#f0f0f0;"></div>
<div style="left:371px;top:381px;width:563px;height:1px;background:#ffffff;"></div>
<div style="left:933px;top:229px;width:1px;height:153px;background:#ffffff;"></div>
<div style="left:373px;top:231px;width:559px;height:34px;background:#b4b4b4;"></div>
<div style="left:373px;top:231px;width:559px;height:1px;background:#bebebe;"></div>
<div style="left:373px;top:231px;width:1px;height:34px;background:#bebebe;"></div>
<div style="left:378px;top:236px;width:549px;height:24px;background:#98b4d2;"></div>
<div style="left:373px;top:265px;width:559px;height:115px;background:#ffffff;"></div>
<div class="tb" style="left:383px;top:236px;letter-spacing:-0.08px">Reusable Fields</div>
<div style="left:371px;top:382px;width:563px;height:3px;background:#f0f0f0;"></div>
<div style="left:371px;top:385px;width:563px;height:1px;background:#a0a0a0;"></div>
<div style="left:371px;top:385px;width:1px;height:215px;background:#a0a0a0;"></div>
<div style="left:372px;top:386px;width:561px;height:1px;background:#646464;"></div>
<div style="left:372px;top:386px;width:1px;height:213px;background:#646464;"></div>
<div style="left:372px;top:598px;width:561px;height:1px;background:#f0f0f0;"></div>
<div style="left:932px;top:386px;width:1px;height:213px;background:#f0f0f0;"></div>
<div style="left:371px;top:599px;width:563px;height:1px;background:#ffffff;"></div>
<div style="left:933px;top:385px;width:1px;height:215px;background:#ffffff;"></div>
<div style="left:373px;top:387px;width:559px;height:34px;background:#b4b4b4;"></div>
<div style="left:373px;top:387px;width:559px;height:1px;background:#bebebe;"></div>
<div style="left:373px;top:387px;width:1px;height:34px;background:#bebebe;"></div>
<div style="left:378px;top:392px;width:549px;height:24px;background:#a0a0a0;"></div>
<div style="left:373px;top:421px;width:559px;height:177px;background:#ffffff;"></div>
<div class="tb" style="left:383px;top:392px;letter-spacing:-0.47px">COBOL Assignments</div>
<div style="left:373px;top:73px;width:559px;height:11px;background:#ffffff;"></div>
<div style="left:373px;top:73px;width:559px;height:1px;background:#e6e6e6;"></div>
<div style="left:373px;top:84px;width:559px;height:13px;background:linear-gradient(#f8f8f8,#eeeeee)"></div>
<div style="left:373px;top:97px;width:559px;height:1px;background:#d2d2d2;"></div>
<div style="left:622px;top:75px;width:1px;height:9px;background:#ececec;"></div>
<div style="left:622px;top:84px;width:1px;height:13px;background:#dcdcdc;"></div>
<div style="left:621px;top:84px;width:1px;height:13px;background:#fbfbfb;"></div>
<div style="left:623px;top:84px;width:1px;height:13px;background:#fbfbfb;"></div>
<div style="left:722px;top:75px;width:1px;height:9px;background:#ececec;"></div>
<div style="left:722px;top:84px;width:1px;height:13px;background:#dcdcdc;"></div>
<div style="left:721px;top:84px;width:1px;height:13px;background:#fbfbfb;"></div>
<div style="left:723px;top:84px;width:1px;height:13px;background:#fbfbfb;"></div>
<div style="left:822px;top:75px;width:1px;height:9px;background:#ececec;"></div>
<div style="left:822px;top:84px;width:1px;height:13px;background:#dcdcdc;"></div>
<div style="left:821px;top:84px;width:1px;height:13px;background:#fbfbfb;"></div>
<div style="left:823px;top:84px;width:1px;height:13px;background:#fbfbfb;"></div>
<div style="left:895px;top:75px;width:1px;height:9px;background:#ececec;"></div>
<div style="left:895px;top:84px;width:1px;height:13px;background:#dcdcdc;"></div>
<div style="left:894px;top:84px;width:1px;height:13px;background:#fbfbfb;"></div>
<div style="left:896px;top:84px;width:1px;height:13px;background:#fbfbfb;"></div>
<div class="t" style="left:379px;top:75px;line-height:24px">Name</div>
<div class="t" style="left:629px;top:75px;line-height:24px">Direction</div>
<div class="t" style="left:729px;top:75px;line-height:24px">Type</div>
<div class="t" style="left:829px;top:75px;line-height:24px">Occurs</div>
<div style="left:400px;top:102px;width:1px;height:1px;background:#b8b8b8;"></div>
<div style="left:396px;top:106px;width:11px;height:1px;background:#8a8a8a;"></div>
<div style="left:396px;top:106px;width:1px;height:5px;background:#8a8a8a;"></div>
<div style="left:396px;top:110px;width:11px;height:1px;background:#8a8a8a;"></div>
<div style="left:406px;top:106px;width:1px;height:5px;background:#8a8a8a;"></div>
<div style="left:397px;top:107px;width:9px;height:1px;background:#000;"></div>
<div style="left:397px;top:107px;width:1px;height:3px;background:#000;"></div>
<div style="left:398px;top:108px;width:8px;height:2px;background:#fff;"></div>
<div style="left:407px;top:107px;width:1px;height:5px;background:#000;"></div>
<div style="left:397px;top:111px;width:11px;height:1px;background:#000;"></div>
<div class="t tw" style="left:414px;top:98px;line-height:20px;letter-spacing:-0.15px">lnk_customer_name</div>
<div class="t tw" style="left:628px;top:98px;line-height:20px;letter-spacing:0.5px">Input</div>
<div class="t tw" style="left:728px;top:98px;line-height:20px;letter-spacing:0.3px">string</div>
<div style="left:400px;top:122px;width:1px;height:1px;background:#b8b8b8;"></div>
<div style="left:396px;top:126px;width:11px;height:1px;background:#8a8a8a;"></div>
<div style="left:396px;top:126px;width:1px;height:5px;background:#8a8a8a;"></div>
<div style="left:396px;top:130px;width:11px;height:1px;background:#8a8a8a;"></div>
<div style="left:406px;top:126px;width:1px;height:5px;background:#8a8a8a;"></div>
<div style="left:397px;top:127px;width:9px;height:1px;background:#000;"></div>
<div style="left:397px;top:127px;width:1px;height:3px;background:#000;"></div>
<div style="left:398px;top:128px;width:8px;height:2px;background:#fff;"></div>
<div style="left:407px;top:127px;width:1px;height:5px;background:#000;"></div>
<div style="left:397px;top:131px;width:11px;height:1px;background:#000;"></div>
<div class="t tw" style="left:414px;top:118px;line-height:20px;letter-spacing:-0.15px">lnk_consultant_id</div>
<div class="t tw" style="left:628px;top:118px;line-height:20px;letter-spacing:0.5px">Input</div>
<div class="t tw" style="left:728px;top:118px;line-height:20px;letter-spacing:0.3px">integer</div>
<div style="left:380px;top:147px;width:7px;height:7px;border:1px solid #919191;border-radius:1px;background:linear-gradient(#fdfdfd,#e6e6e6)"></div>
<div style="left:382px;top:151px;width:5px;height:1px;background:#35579e;"></div>
<div style="left:384px;top:149px;width:1px;height:5px;background:#35579e;"></div>
<div style="left:399px;top:143px;width:11px;height:1px;background:#8a8a8a;"></div>
<div style="left:399px;top:143px;width:1px;height:5px;background:#8a8a8a;"></div>
<div style="left:399px;top:147px;width:11px;height:1px;background:#8a8a8a;"></div>
<div style="left:409px;top:143px;width:1px;height:5px;background:#8a8a8a;"></div>
<div style="left:400px;top:144px;width:9px;height:1px;background:#000;"></div>
<div style="left:400px;top:144px;width:1px;height:3px;background:#000;"></div>
<div style="left:401px;top:145px;width:8px;height:2px;background:#fff;"></div>
<div style="left:410px;top:144px;width:1px;height:5px;background:#000;"></div>
<div style="left:400px;top:148px;width:11px;height:1px;background:#000;"></div>
<div style="left:397px;top:146px;width:11px;height:1px;background:#8a8a8a;"></div>
<div style="left:397px;top:146px;width:1px;height:5px;background:#8a8a8a;"></div>
<div style="left:397px;top:150px;width:11px;height:1px;background:#8a8a8a;"></div>
<div style="left:407px;top:146px;width:1px;height:5px;background:#8a8a8a;"></div>
<div style="left:398px;top:147px;width:9px;height:1px;background:#000;"></div>
<div style="left:398px;top:147px;width:1px;height:3px;background:#000;"></div>
<div style="left:399px;top:148px;width:8px;height:2px;background:#fff;"></div>
<div style="left:408px;top:147px;width:1px;height:5px;background:#000;"></div>
<div style="left:398px;top:151px;width:11px;height:1px;background:#000;"></div>
<div style="left:395px;top:149px;width:11px;height:1px;background:#8a8a8a;"></div>
<div style="left:395px;top:149px;width:1px;height:5px;background:#8a8a8a;"></div>
<div style="left:395px;top:153px;width:11px;height:1px;background:#8a8a8a;"></div>
<div style="left:405px;top:149px;width:1px;height:5px;background:#8a8a8a;"></div>
<div style="left:396px;top:150px;width:9px;height:1px;background:#000;"></div>
<div style="left:396px;top:150px;width:1px;height:3px;background:#000;"></div>
<div style="left:397px;top:151px;width:8px;height:2px;background:#fff;"></div>
<div style="left:406px;top:150px;width:1px;height:5px;background:#000;"></div>
<div style="left:396px;top:154px;width:11px;height:1px;background:#000;"></div>
<div class="t tw" style="left:414px;top:138px;line-height:20px;letter-spacing:-0.15px">lnk_date</div>
<div class="t tw" style="left:628px;top:138px;line-height:20px;letter-spacing:0.5px">Input</div>
<div style="left:400px;top:162px;width:1px;height:1px;background:#b8b8b8;"></div>
<div style="left:396px;top:166px;width:11px;height:1px;background:#8a8a8a;"></div>
<div style="left:396px;top:166px;width:1px;height:5px;background:#8a8a8a;"></div>
<div style="left:396px;top:170px;width:11px;height:1px;background:#8a8a8a;"></div>
<div style="left:406px;top:166px;width:1px;height:5px;background:#8a8a8a;"></div>
<div style="left:397px;top:167px;width:9px;height:1px;background:#000;"></div>
<div style="left:397px;top:167px;width:1px;height:3px;background:#000;"></div>
<div style="left:398px;top:168px;width:8px;height:2px;background:#fff;"></div>
<div style="left:407px;top:167px;width:1px;height:5px;background:#000;"></div>
<div style="left:397px;top:171px;width:11px;height:1px;background:#000;"></div>
<div class="t tw" style="left:414px;top:158px;line-height:20px;letter-spacing:-0.15px">lnk_time_slot</div>
<div class="t tw" style="left:628px;top:158px;line-height:20px;letter-spacing:0.5px">Input</div>
<div class="t tw" style="left:728px;top:158px;line-height:20px;letter-spacing:0.3px">integer</div>
<div style="left:400px;top:182px;width:1px;height:1px;background:#b8b8b8;"></div>
<div style="left:396px;top:186px;width:11px;height:1px;background:#8a8a8a;"></div>
<div style="left:396px;top:186px;width:1px;height:5px;background:#8a8a8a;"></div>
<div style="left:396px;top:190px;width:11px;height:1px;background:#8a8a8a;"></div>
<div style="left:406px;top:186px;width:1px;height:5px;background:#8a8a8a;"></div>
<div style="left:397px;top:187px;width:9px;height:1px;background:#000;"></div>
<div style="left:397px;top:187px;width:1px;height:3px;background:#000;"></div>
<div style="left:398px;top:188px;width:8px;height:2px;background:#fff;"></div>
<div style="left:407px;top:187px;width:1px;height:5px;background:#000;"></div>
<div style="left:397px;top:191px;width:11px;height:1px;background:#000;"></div>
<div class="t tw" style="left:414px;top:178px;line-height:20px;letter-spacing:-0.15px">lnk_op_ok</div>
<div class="t tw" style="left:628px;top:178px;line-height:20px;letter-spacing:0.5px">Output</div>
<div class="t tw" style="left:728px;top:178px;line-height:20px;letter-spacing:0.3px">string</div>
<div style="left:373px;top:265px;width:559px;height:11px;background:#ffffff;"></div>
<div style="left:373px;top:265px;width:559px;height:1px;background:#e6e6e6;"></div>
<div style="left:373px;top:276px;width:559px;height:13px;background:linear-gradient(#f8f8f8,#eeeeee)"></div>
<div style="left:373px;top:289px;width:559px;height:1px;background:#d2d2d2;"></div>
<div style="left:722px;top:267px;width:1px;height:9px;background:#ececec;"></div>
<div style="left:722px;top:276px;width:1px;height:13px;background:#dcdcdc;"></div>
<div style="left:721px;top:276px;width:1px;height:13px;background:#fbfbfb;"></div>
<div style="left:723px;top:276px;width:1px;height:13px;background:#fbfbfb;"></div>
<div style="left:822px;top:267px;width:1px;height:9px;background:#ececec;"></div>
<div style="left:822px;top:276px;width:1px;height:13px;background:#dcdcdc;"></div>
<div style="left:821px;top:276px;width:1px;height:13px;background:#fbfbfb;"></div>
<div style="left:823px;top:276px;width:1px;height:13px;background:#fbfbfb;"></div>
<div style="left:905px;top:267px;width:1px;height:9px;background:#ececec;"></div>
<div style="left:905px;top:276px;width:1px;height:13px;background:#dcdcdc;"></div>
<div style="left:904px;top:276px;width:1px;height:13px;background:#fbfbfb;"></div>
<div style="left:906px;top:276px;width:1px;height:13px;background:#fbfbfb;"></div>
<div class="t" style="left:379px;top:267px;line-height:24px">Name</div>
<div class="t" style="left:729px;top:267px;line-height:24px">Type</div>
<div class="t" style="left:829px;top:267px;line-height:24px">Occurs</div>
<div style="left:373px;top:421px;width:559px;height:11px;background:#ffffff;"></div>
<div style="left:373px;top:421px;width:559px;height:1px;background:#e6e6e6;"></div>
<div style="left:373px;top:432px;width:559px;height:13px;background:linear-gradient(#f8f8f8,#eeeeee)"></div>
<div style="left:373px;top:445px;width:559px;height:1px;background:#d2d2d2;"></div>
<div style="left:574px;top:423px;width:1px;height:9px;background:#ececec;"></div>
<div style="left:574px;top:432px;width:1px;height:13px;background:#dcdcdc;"></div>
<div style="left:573px;top:432px;width:1px;height:13px;background:#fbfbfb;"></div>
<div style="left:575px;top:432px;width:1px;height:13px;background:#fbfbfb;"></div>
<div style="left:675px;top:423px;width:1px;height:9px;background:#ececec;"></div>
<div style="left:675px;top:432px;width:1px;height:13px;background:#dcdcdc;"></div>
<div style="left:674px;top:432px;width:1px;height:13px;background:#fbfbfb;"></div>
<div style="left:676px;top:432px;width:1px;height:13px;background:#fbfbfb;"></div>
<div style="left:674px;top:423px;width:1px;height:9px;background:#ececec;"></div>
<div style="left:674px;top:432px;width:1px;height:13px;background:#e0e0e0;"></div>
<div style="left:673px;top:432px;width:1px;height:13px;background:#fbfbfb;"></div>
<div class="t" style="left:379px;top:423px;line-height:24px;letter-spacing:-0.25px">COBOL Field</div>
<div class="t" style="left:581px;top:423px;line-height:24px;">Value</div>
<div style="left:381px;top:450px;width:1px;height:1px;background:#b8b8b8;"></div>
<div style="left:377px;top:454px;width:11px;height:1px;background:#8a8a8a;"></div>
<div style="left:377px;top:454px;width:1px;height:5px;background:#8a8a8a;"></div>
<div style="left:377px;top:458px;width:11px;height:1px;background:#8a8a8a;"></div>
<div style="left:387px;top:454px;width:1px;height:5px;background:#8a8a8a;"></div>
<div style="left:378px;top:455px;width:9px;height:1px;background:#000;"></div>
<div style="left:378px;top:455px;width:1px;height:3px;background:#000;"></div>
<div style="left:379px;top:456px;width:8px;height:2px;background:#fff;"></div>
<div style="left:388px;top:455px;width:1px;height:5px;background:#000;"></div>
<div style="left:378px;top:459px;width:11px;height:1px;background:#000;"></div>
<div class="t tw" style="left:395px;top:446px;line-height:20px;letter-spacing:0.3px">lnk-operation</div>
<div class="t tw" style="left:581px;top:446px;line-height:20px;letter-spacing:-0.6px">0</div>
<div style="left:381px;top:470px;width:1px;height:1px;background:#b8b8b8;"></div>
<div style="left:377px;top:474px;width:11px;height:1px;background:#8a8a8a;"></div>
<div style="left:377px;top:474px;width:1px;height:5px;background:#8a8a8a;"></div>
<div style="left:377px;top:478px;width:11px;height:1px;background:#8a8a8a;"></div>
<div style="left:387px;top:474px;width:1px;height:5px;background:#8a8a8a;"></div>
<div style="left:378px;top:475px;width:9px;height:1px;background:#000;"></div>
<div style="left:378px;top:475px;width:1px;height:3px;background:#000;"></div>
<div style="left:379px;top:476px;width:8px;height:2px;background:#fff;"></div>
<div style="left:388px;top:475px;width:1px;height:5px;background:#000;"></div>
<div style="left:378px;top:479px;width:11px;height:1px;background:#000;"></div>
<div class="t tw" style="left:395px;top:466px;line-height:20px;letter-spacing:0.3px">lnk-store-info.lnk-id</div>
<div class="t tw" style="left:581px;top:466px;line-height:20px;letter-spacing:-0.6px">08780</div>
</body></html>
